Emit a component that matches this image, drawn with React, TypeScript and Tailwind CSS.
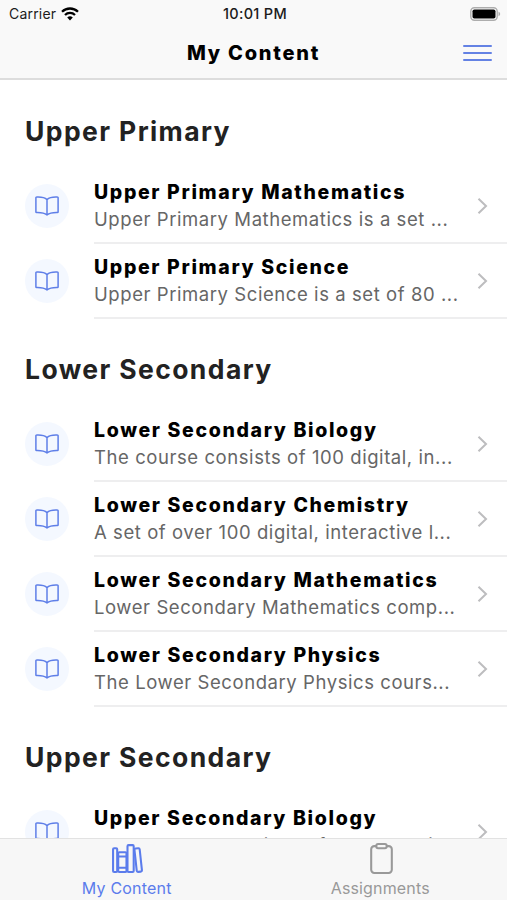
import { IoClipboardOutline, IoLibraryOutline } from 'react-icons/io5';

interface Course {
  title: string;
  description: string;
}

interface Section {
  name: string;
  courses: Course[];
}

const sections: Section[] = [
  {
    name: 'Upper Primary',
    courses: [
      { title: 'Upper Primary Mathematics', description: 'Upper Primary Mathematics is a set ...' },
      { title: 'Upper Primary Science', description: 'Upper Primary Science is a set of 80 ...' },
    ],
  },
  {
    name: 'Lower Secondary',
    courses: [
      { title: 'Lower Secondary Biology', description: 'The course consists of 100 digital, in...' },
      { title: 'Lower Secondary Chemistry', description: 'A set of over 100 digital, interactive l...' },
      { title: 'Lower Secondary Mathematics', description: 'Lower Secondary Mathematics comp...' },
      { title: 'Lower Secondary Physics', description: 'The Lower Secondary Physics cours...' },
    ],
  },
  {
    name: 'Upper Secondary',
    courses: [
      { title: 'Upper Secondary Biology', description: 'The course comprises of over 100 di...' },
    ],
  },
];

function StatusBar() {
  return (
    <div className="grid h-[27px] grid-cols-3 items-center pl-[9px] pr-[6px] text-[#1c1c1c]">
      <div className="flex items-center gap-[5px]">
        <span className="text-[14px] tracking-[0.2px]">Carrier</span>
        <svg width="18" height="14" viewBox="0 0 18 14" fill="none" stroke="#000" strokeWidth="2.3">
          <path d="M1 4.800a11.400 11.400 0 0 1 16 0" />
          <path d="M4 8a7.100 7.100 0 0 1 10 0" />
          <path d="M9 13.500 6.200 10.600a4 4 0 0 1 5.600 0z" fill="#000" stroke="none" />
        </svg>
      </div>
      <span className="whitespace-nowrap text-center text-[14.5px] font-medium tracking-[0.3px]">10:01 PM</span>
      <svg className="justify-self-end" width="31" height="14" viewBox="0 0 31 14">
        <rect x="0.8" y="0.8" width="26.4" height="12.4" rx="3.6" fill="#fff" stroke="#adadad" strokeWidth="1.4" />
        <rect x="2.5" y="2.5" width="23" height="9" rx="1.8" fill="#000" />
        <path d="M28.500 4.800c2.200.7 2.200 3.700 0 4.400z" fill="#adadad" />
      </svg>
    </div>
  );
}

function BookIcon() {
  return (
    <svg width="24" height="20" viewBox="0 0 24 20" fill="none" stroke="#5f7fe8" strokeWidth="1.5" strokeLinecap="round" strokeLinejoin="round">
      <path d="M12 3.600C9.600 1.300 5.400.8 1.600 1a.7.7 0 0 0-.7.7v14.200c0 .4.3.7.7.7 3.800-.1 7.800.3 10.400 2.400 2.600-2.100 6.600-2.500 10.400-2.400.4 0 .7-.3.7-.7V1.700a.7.7 0 0 0-.7-.7C18.600.8 14.400 1.300 12 3.600zM12 3.600V19" />
    </svg>
  );
}

function CourseRow({ title, description }: Course) {
  return (
    <li className="flex h-[75px] pl-[25px]">
      <div className="mt-[15px] flex h-11 w-11 shrink-0 items-center justify-center rounded-full bg-[#f4f8ff]">
        <BookIcon />
      </div>
      <div className="ml-[25px] flex min-w-0 flex-1 border-b-2 border-[#eeeeef]">
        <div className="min-w-0 flex-1 pt-[10px]">
          <h3 className="whitespace-nowrap text-[19.5px] font-extrabold leading-[27px] tracking-[1.65px] text-black">{title}</h3>
          <p className="whitespace-nowrap text-[18.5px] leading-[27px] tracking-[0.57px] text-[#666666]">{description}</p>
        </div>
        <svg className="mr-[18px] mt-[28px] shrink-0" width="13" height="18" viewBox="0 0 13 18" fill="none" stroke="#bdbdbf" strokeWidth="2">
          <path d="M2.500 1.800 10 9l-7.500 7.200" />
        </svg>
      </div>
    </li>
  );
}

export default function App() {
  return (
    <div className="flex h-[900px] w-[507px] flex-col overflow-hidden bg-white font-['Inter',sans-serif]">
      <header className="h-20 shrink-0 border-b-2 border-[#dddddd] bg-[#f9f9f9]">
        <StatusBar />
        <div className="grid h-[51px] grid-cols-[1fr_auto_1fr] items-center">
          <span />
          <h1 className="text-[20px] font-extrabold tracking-[1.75px] text-black">My Content</h1>
          <button aria-label="Menu" className="mr-[15px] flex w-[29px] flex-col gap-[5px] justify-self-end">
            <span className="h-[2px] w-full rounded-full bg-[#6482e4]" />
            <span className="h-[2px] w-full rounded-full bg-[#6482e4]" />
            <span className="h-[2px] w-full rounded-full bg-[#6482e4]" />
          </button>
        </div>
      </header>

      <main className="min-h-0 flex-1 overflow-hidden pt-px">
        {sections.map(section => (
          <section key={section.name}>
            <h2 className="h-[88px] pl-[25px] pt-[34px] text-[26.5px] font-bold leading-[33px] tracking-[1.4px] text-[#222222]">
              {section.name}
            </h2>
            <ul>
              {section.courses.map(course => (
                <CourseRow key={course.title} {...course} />
              ))}
            </ul>
          </section>
        ))}
      </main>

      <nav className="grid h-[62px] shrink-0 grid-cols-2 border-t border-[#e2e2e2] bg-[#f7f7f7] text-[16px] leading-[20px]">
        <a className="flex flex-col items-center pt-[3px] text-[#5b7cec]">
          <IoLibraryOutline size={33} className="ml-[2px]" />
          <span className="mt-[3px] tracking-[0.2px]">My Content</span>
        </a>
        <a className="flex flex-col items-center pt-[3px] text-[#999999]">
          <IoClipboardOutline size={33} className="ml-[2px]" />
          <span className="mt-[3px] tracking-[0.15px]">Assignments</span>
        </a>
      </nav>
    </div>
  );
}
